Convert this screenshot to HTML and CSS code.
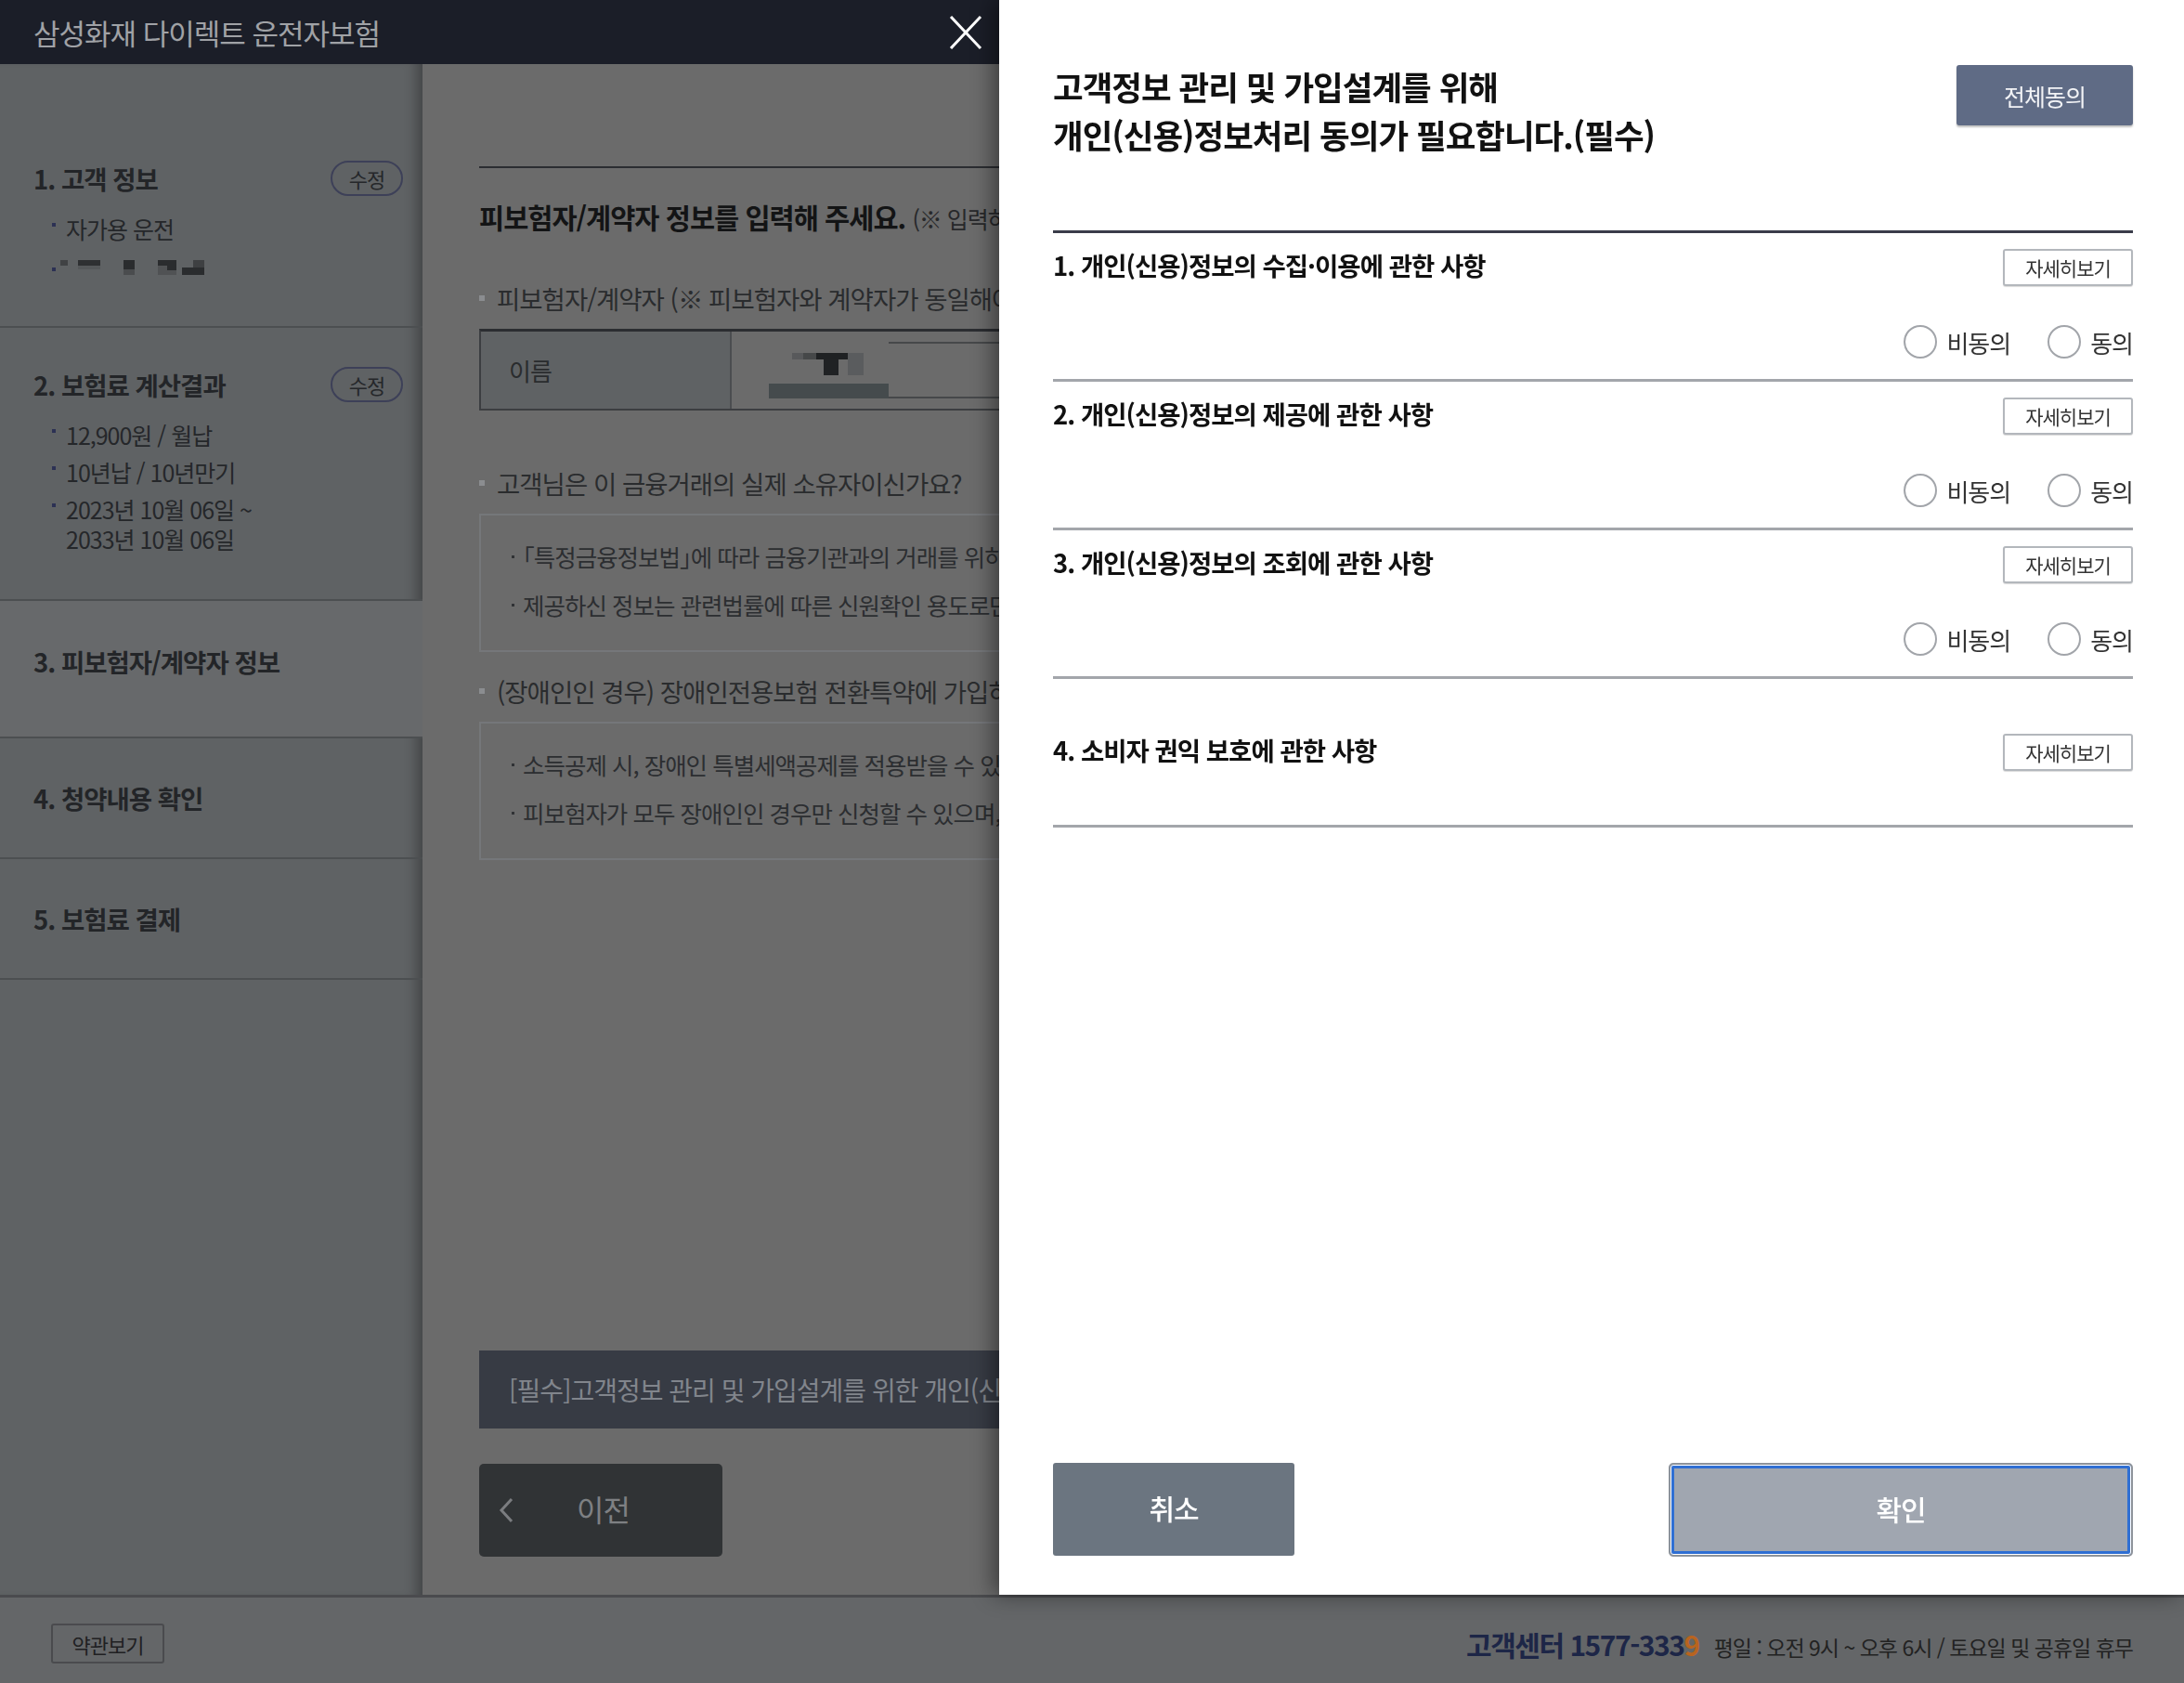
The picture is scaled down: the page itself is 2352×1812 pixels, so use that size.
FILE: index.html
```html
<!DOCTYPE html>
<html lang="ko">
<head>
    <meta charset="UTF-8">
    <meta name="viewport" content="width=device-width, initial-scale=1.0">
    <title>삼성화재 다이렉트 운전자보험</title>
    <link rel="stylesheet" href="styles.css">
</head>
<body>
    <div class="page">
        <header class="top-bar">
            <h1>삼성화재 다이렉트 운전자보험</h1>
            <button class="close-btn" aria-label="닫기">
                <svg width="36" height="36" viewBox="0 0 36 36"><path d="M2 1 L34 35 M34 1 L2 35" stroke="#fff" stroke-width="3" fill="none"/></svg>
            </button>
        </header>

        <div class="layout">
            <aside class="steps">
                <div class="step">
                    <div class="step-head">
                        <h2>1. 고객 정보</h2>
                        <button class="edit-btn">수정</button>
                    </div>
                    <ul class="step-info">
                        <li>자가용 운전</li>
                        <li class="masked">
                            <svg width="160" height="20" viewBox="0 0 160 20">
                                <rect x="4" y="4" width="8" height="6" fill="#404244"/>
                                <rect x="23" y="4" width="24" height="6" fill="#2e3032"/>
                                <rect x="23" y="10" width="24" height="4" fill="#55585a"/>
                                <rect x="72" y="4" width="12" height="10" fill="#2a2c2e"/>
                                <rect x="72" y="14" width="12" height="6" fill="#4a4c4e"/>
                                <rect x="109" y="4" width="20" height="6" fill="#2a2c2e"/>
                                <rect x="109" y="10" width="20" height="10" fill="#505254"/>
                                <rect x="119" y="10" width="10" height="5" fill="#2a2c2e"/>
                                <rect x="135" y="12" width="24" height="8" fill="#2a2c2e"/>
                                <rect x="147" y="4" width="12" height="8" fill="#3e4042"/>
                            </svg>
                        </li>
                    </ul>
                </div>
                <div class="step">
                    <div class="step-head">
                        <h2>2. 보험료 계산결과</h2>
                        <button class="edit-btn">수정</button>
                    </div>
                    <ul class="step-info">
                        <li>12,900원 / 월납</li>
                        <li>10년납 / 10년만기</li>
                        <li>2023년 10월 06일 ~<br>2033년 10월 06일</li>
                    </ul>
                </div>
                <div class="step single current">
                    <div class="step-head"><h2>3. 피보험자/계약자 정보</h2></div>
                </div>
                <div class="step single">
                    <div class="step-head"><h2>4. 청약내용 확인</h2></div>
                </div>
                <div class="step single">
                    <div class="step-head"><h2>5. 보험료 결제</h2></div>
                </div>
            </aside>

            <main class="content">
                <div class="section-title">
                    <h2>피보험자/계약자 정보를 입력해 주세요. <span class="note">(※ 입력하신 정보는 보험계약 체결을 위해서만 사용됩니다.)</span></h2>
                </div>

                <p class="sub-title">피보험자/계약자 (<b>※</b> 피보험자와 계약자가 동일해야 가입 가능합니다.)</p>
                <div class="info-table">
                    <div class="th">이름</div>
                    <div class="td">
                        <div class="name-field">
                            <svg width="129" height="61" viewBox="0 0 129 61">
                                <rect x="25" y="12" width="12" height="7" fill="#58595b"/>
                                <rect x="37" y="12" width="14" height="7" fill="#464849"/>
                                <rect x="51" y="12" width="34" height="7" fill="#1f2123"/>
                                <rect x="59" y="19" width="16" height="17" fill="#202224"/>
                                <rect x="85" y="12" width="17" height="24" fill="#5a5c5e"/>
                                <rect x="0" y="45" width="129" height="16" fill="#454b4d"/>
                            </svg>
                            <div class="name-input"></div>
                        </div>
                    </div>
                </div>

                <p class="sub-title owner">고객님은 이 금융거래의 실제 소유자이신가요?</p>
                <ul class="notice-box">
                    <li>｢특정금융정보법｣에 따라 금융기관과의 거래를 위하여 실제 소유자 여부를 확인하고 있습니다.</li>
                    <li>제공하신 정보는 관련법률에 따른 신원확인 용도로만 사용됩니다.</li>
                </ul>

                <p class="sub-title disabled">(장애인인 경우) 장애인전용보험 전환특약에 가입하시겠습니까?</p>
                <ul class="notice-box">
                    <li>소득공제 시, 장애인 특별세액공제를 적용받을 수 있습니다.</li>
                    <li>피보험자가 모두 장애인인 경우만 신청할 수 있으며, 증빙서류 제출이 필요합니다.</li>
                </ul>

                <div class="consent-bar">[필수]고객정보 관리 및 가입설계를 위한 개인(신용)정보처리 동의</div>

                <button class="prev-btn">
                    <svg width="16" height="28" viewBox="0 0 16 28"><path d="M14 2 L3 14 L14 26" fill="none" stroke="#7b7d80" stroke-width="3"/></svg>
                    <span>이전</span>
                </button>
            </main>
        </div>

        <footer class="site-footer">
            <button class="terms-btn">약관보기</button>
            <div class="cs">
                <strong>고객센터 1577-333<em>9</em></strong>
                <span>평일 : 오전 9시 ~ 오후 6시 / 토요일 및 공휴일 휴무</span>
            </div>
        </footer>
    </div>

    <section class="agree-layer">
        <div class="agree-head">
            <h2>고객정보 관리 및 가입설계를 위해<br>개인(신용)정보처리 동의가 필요합니다.(필수)</h2>
            <button class="all-btn">전체동의</button>
        </div>

        <ul class="agree-list">
            <li class="agree-item">
                <div class="agree-row">
                    <h3>1. 개인(신용)정보의 수집·이용에 관한 사항</h3>
                    <button class="detail-btn">자세히보기</button>
                </div>
                <div class="agree-choice">
                    <label><input type="radio" name="a1"> 비동의</label>
                    <label><input type="radio" name="a1"> 동의</label>
                </div>
            </li>
            <li class="agree-item">
                <div class="agree-row">
                    <h3>2. 개인(신용)정보의 제공에 관한 사항</h3>
                    <button class="detail-btn">자세히보기</button>
                </div>
                <div class="agree-choice">
                    <label><input type="radio" name="a2"> 비동의</label>
                    <label><input type="radio" name="a2"> 동의</label>
                </div>
            </li>
            <li class="agree-item">
                <div class="agree-row">
                    <h3>3. 개인(신용)정보의 조회에 관한 사항</h3>
                    <button class="detail-btn">자세히보기</button>
                </div>
                <div class="agree-choice">
                    <label><input type="radio" name="a3"> 비동의</label>
                    <label><input type="radio" name="a3"> 동의</label>
                </div>
            </li>
            <li class="agree-item single">
                <div class="agree-row">
                    <h3>4. 소비자 권익 보호에 관한 사항</h3>
                    <button class="detail-btn">자세히보기</button>
                </div>
            </li>
        </ul>

        <div class="agree-foot">
            <button class="cancel-btn">취소</button>
            <button class="ok-btn">확인</button>
        </div>
    </section>
</body>
</html>
```

FILE: styles.css
```css
html, body {
    margin: 0;
    height: 100%;
    overflow: hidden;
}

body {
    font-family: "Noto Sans CJK KR", "Noto Sans", sans-serif;
    background-color: #646668;
    letter-spacing: -1px;
}

button {
    font-family: inherit;
    letter-spacing: inherit;
    cursor: pointer;
    padding: 0;
}

.page {
    display: flex;
    flex-direction: column;
    height: 1812px;
}

/* top bar */
.top-bar {
    height: 69px;
    background-color: #1b1e28;
    display: flex;
    align-items: center;
    justify-content: space-between;
    padding: 0 0 0 36px;
    flex-shrink: 0;
}

.top-bar h1 {
    margin: 0;
    font-size: 31px;
    font-weight: 400;
    color: #a0a2a6;
}

.close-btn {
    width: 36px;
    height: 36px;
    margin-right: 1294px;
    background: none;
    border: 0;
}

.layout {
    flex: 1;
    display: flex;
    min-height: 0;
}

/* left steps */
.steps {
    width: 455px;
    flex-shrink: 0;
    padding-top: 62px;
    box-sizing: border-box;
    background-color: #5f6264;
    box-shadow: inset -16px 0 14px -10px rgba(0, 0, 0, 0.3);
}

.step {
    padding: 42px 21px 49px 36px;
    border-bottom: 2px solid #4c4f51;
}

.step.single {
    padding: 45px 21px 45px 36px;
}

.step.current {
    padding: 46px 21px 62px 36px;
    background-color: #67696b;
}

.step-head {
    display: flex;
    align-items: center;
    justify-content: space-between;
    height: 38px;
}

.step-head h2 {
    margin: 0;
    font-size: 27.5px;
    font-weight: 700;
    color: #232528;
}

.edit-btn {
    width: 78px;
    height: 38px;
    border: 2px solid #3d4058;
    border-radius: 19px;
    background: transparent;
    font-size: 22px;
    color: #25272a;
}

.step-info {
    list-style: none;
    margin: 19px 0 0;
    padding: 0 0 0 20px;
}

.step-info li {
    position: relative;
    padding-left: 15px;
    margin-top: 8px;
    font-size: 25px;
    line-height: 32px;
    color: #25272a;
}

.step-info li:first-child {
    margin-top: 0;
}

.step-info li::before {
    content: "";
    position: absolute;
    left: 0;
    top: 10px;
    width: 4px;
    height: 4px;
    background-color: #2c3154;
}

.step-info li.masked {
    height: 32px;
}

.step-info li.masked::before {
    top: 18px;
}

.step-info li.masked svg {
    display: block;
    padding-top: 6px;
    margin-left: -10px;
}

/* main content */
.content {
    flex: 1;
    min-width: 0;
    display: flex;
    flex-direction: column;
    align-items: flex-start;
    padding: 110px 0 41px 61px;
    background-color: #6b6b6b;
}

.section-title {
    align-self: stretch;
    border-top: 2px solid #2b2d31;
    padding-top: 32px;
}

.section-title h2 {
    margin: 0;
    font-size: 29.5px;
    line-height: 40px;
    font-weight: 700;
    color: #131415;
    white-space: nowrap;
}

.section-title .note {
    font-size: 25px;
    font-weight: 400;
    color: #27282a;
}

.sub-title {
    margin: 47px 0 14px;
    font-size: 27.5px;
    line-height: 38px;
    color: #2a2c2e;
    white-space: nowrap;
}

.sub-title::before {
    content: "";
    display: inline-block;
    width: 6px;
    height: 6px;
    margin-right: 13px;
    vertical-align: 9px;
    background-color: #8b8d90;
}

.sub-title.owner {
    margin-top: 59px;
}

.sub-title.disabled {
    margin-top: 23px;
    margin-bottom: 14px;
}

.info-table {
    align-self: stretch;
    display: flex;
    height: 83px;
    border-top: 3px solid #2b2d31;
    border-bottom: 2px solid #3c3e41;
    border-left: 2px solid #3c3e41;
}

.info-table .th {
    width: 238px;
    padding-left: 30px;
    display: flex;
    align-items: center;
    font-size: 26px;
    color: #2a2c2e;
    background-color: #5f6264;
    border-right: 2px solid #4b4d50;
}

.info-table .td {
    flex: 1;
    display: flex;
    align-items: center;
    padding-left: 40px;
}

.name-field {
    display: flex;
    height: 61px;
}

.name-field svg {
    display: block;
}

.name-input {
    width: 420px;
    border-top: 2px solid #46484a;
    border-bottom: 2px solid #46484a;
    box-sizing: border-box;
}

.notice-box {
    align-self: stretch;
    list-style: none;
    margin: 0;
    padding: 26px 0 31px 33px;
    border: 2px solid #75777a;
}

.notice-box li {
    font-size: 25.5px;
    line-height: 36px;
    color: #2c2e31;
    white-space: nowrap;
}

.notice-box li + li {
    margin-top: 16px;
}

.notice-box li::before {
    content: "";
    display: inline-block;
    width: 3px;
    height: 3px;
    margin-right: 9px;
    vertical-align: 9px;
    background-color: #303235;
}

.consent-bar {
    align-self: stretch;
    margin-top: auto;
    height: 84px;
    line-height: 84px;
    padding-left: 32px;
    font-size: 28px;
    color: #81858c;
    white-space: nowrap;
    background-color: #373b44;
}

.prev-btn {
    margin-top: 38px;
    width: 262px;
    height: 100px;
    display: flex;
    align-items: center;
    padding: 0 0 4px 21px;
    border: 0;
    border-radius: 5px;
    background-color: #303335;
    font-size: 32px;
    color: #7e8083;
}

.prev-btn svg {
    display: block;
    margin-top: 4px;
}

.prev-btn span {
    margin-left: 68px;
}

/* footer */
.site-footer {
    flex-shrink: 0;
    display: flex;
    align-items: center;
    justify-content: space-between;
    padding: 7px 55px 0;
    box-sizing: border-box;
    height: 95px;
    border-top: 3px solid #4a4b4e;
    background-color: #646668;
}

.terms-btn {
    width: 122px;
    height: 43px;
    border: 2px solid #4a4b4e;
    border-radius: 3px;
    background: transparent;
    font-size: 22px;
    color: #1f2022;
}

.cs {
    display: flex;
    align-items: baseline;
    gap: 16px;
}

.cs strong {
    font-size: 30px;
    font-weight: 700;
    color: #1d2647;
    letter-spacing: -1.5px;
}

.cs em {
    font-style: normal;
    color: #b8641f;
}

.cs span {
    font-size: 23px;
    color: #222;
}

/* consent layer */
.agree-layer {
    position: fixed;
    top: 0;
    right: 0;
    width: 1276px;
    height: 1717px;
    box-sizing: border-box;
    padding: 67px 55px 41px 58px;
    display: flex;
    flex-direction: column;
    background-color: #fff;
    box-shadow: -6px 0 22px rgba(0, 0, 0, 0.45);
}

.agree-head {
    display: flex;
    align-items: flex-start;
    justify-content: space-between;
}

.agree-head h2 {
    margin: 0;
    font-size: 35.5px;
    line-height: 52px;
    font-weight: 700;
    color: #111;
}

.all-btn {
    margin-top: 3px;
    width: 190px;
    height: 65px;
    border: 0;
    border-radius: 3px;
    background-color: #5f6b85;
    color: #f2f3f6;
    font-size: 25px;
    box-shadow: 0 2px 2px rgba(0, 0, 0, 0.25);
}

.agree-list {
    list-style: none;
    margin: 77px 0 0;
    padding: 0;
    border-top: 3px solid #3a3c4a;
}

.agree-item {
    padding: 17px 0 22px;
    border-bottom: 3px solid #a3a6ab;
}

.agree-item.single {
    height: 157px;
    padding: 0;
    display: flex;
    align-items: center;
}

.agree-row {
    flex: 1;
    height: 40px;
    display: flex;
    align-items: center;
    justify-content: space-between;
}

.agree-row h3 {
    margin: 0 0 6px;
    font-size: 27.5px;
    font-weight: 700;
    color: #111;
}

.detail-btn {
    width: 140px;
    height: 40px;
    border: 2px solid #b3b7bc;
    border-radius: 3px;
    background-color: #fff;
    font-size: 21px;
    color: #333;
    box-shadow: 0 1px 1px rgba(0, 0, 0, 0.15);
}

.agree-choice {
    display: flex;
    justify-content: flex-end;
    gap: 40px;
    height: 36px;
    margin-top: 42px;
}

.agree-choice label {
    display: flex;
    align-items: center;
    gap: 10px;
    font-size: 26px;
    color: #333;
}

.agree-choice input {
    appearance: none;
    -webkit-appearance: none;
    margin: 0;
    width: 36px;
    height: 36px;
    box-sizing: border-box;
    border: 2px solid #a2a5aa;
    border-radius: 50%;
    background-color: #fff;
}

.agree-foot {
    margin-top: auto;
    display: flex;
    justify-content: space-between;
    align-items: flex-start;
}

.cancel-btn {
    width: 260px;
    height: 100px;
    padding-bottom: 4px;
    border: 0;
    border-radius: 3px;
    background-color: #6b7580;
    color: #fff;
    font-size: 30px;
    font-weight: 500;
}

.ok-btn {
    width: 500px;
    height: 101px;
    padding-bottom: 4px;
    border: 2px solid #8d939b;
    border-radius: 5px;
    background-color: #a0a6b0;
    box-shadow: inset 0 0 0 1px #fff, inset 0 0 0 4px #2f6fd3;
    color: #fff;
    font-size: 30px;
    font-weight: 500;
}
```
